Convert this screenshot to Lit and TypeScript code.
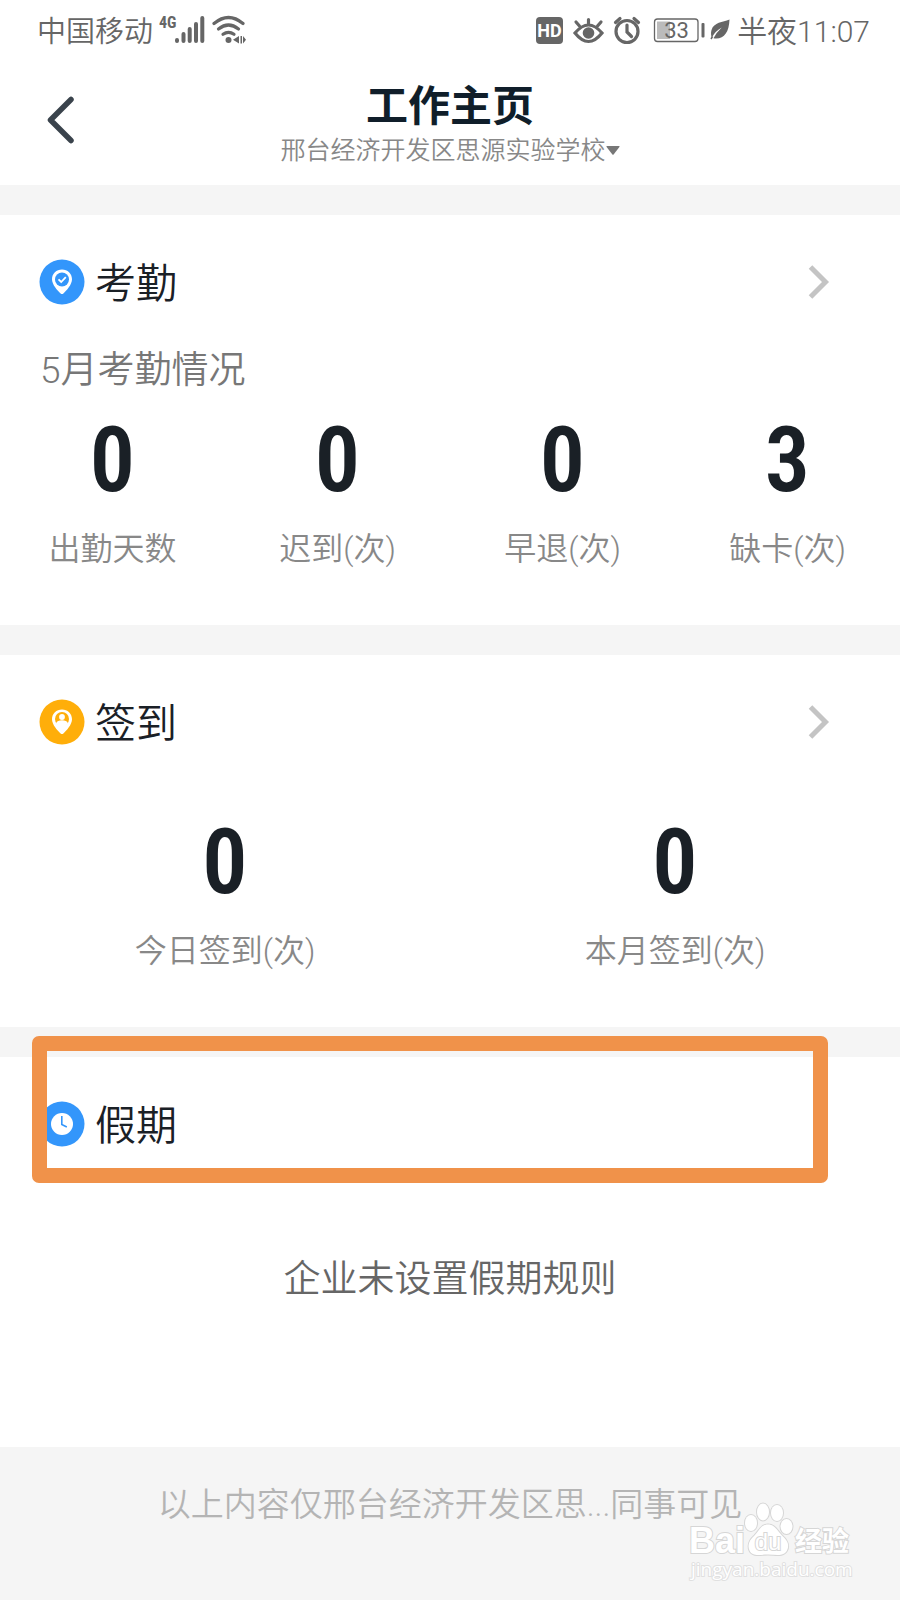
import { LitElement, html, svg, css, nothing } from "lit";
import { customElement, property } from "lit/decorators.js";

interface Stat {
  value: number;
  label: string;
}

const badges: Record<string, unknown> = {
  attendance: svg`
    <circle cx="23" cy="23" r="22.5" fill="#3396fb"/>
    <path d="M23 10.500c-5.600 0-10 4.200-10 9.700 0 5.400 5.600 11.500 8.600 14.200.8.700 2 .7 2.800 0C27.400 31.700 33 25.600 33 20.200c0-5.500-4.400-9.700-10-9.700z" fill="#fff"/>
    <circle cx="23" cy="20.500" r="7" fill="#3396fb"/>
    <path d="M19.500 20.300l2.700 2.700 4.600-4.800" fill="none" stroke="#fff" stroke-width="1.800"/>`,
  checkin: svg`
    <circle cx="23" cy="23" r="22.500" fill="#ffae0a"/>
    <path d="M23 10.500c-5.600 0-10 4.200-10 9.700 0 5.400 5.600 11.500 8.600 14.200.8.700 2 .7 2.800 0C27.400 31.700 33 25.600 33 20.200c0-5.500-4.400-9.700-10-9.700z" fill="#fff"/>
    <circle cx="23" cy="20" r="7" fill="#ffae0a"/>
    <circle cx="23" cy="18" r="2.900" fill="#fff"/>
    <path d="M17 24.500c1-2.600 3-3.200 6-3.200s5 .6 6 3.200l-3 3h-6z" fill="#fff"/>`,
  holiday: svg`
    <circle cx="23" cy="23" r="22.500" fill="#3396fb"/>
    <circle cx="23" cy="23" r="11" fill="#fff"/>
    <path d="M22.800 15v8.500l5 2.500" fill="none" stroke="#3396fb" stroke-width="1.600"/>`,
};

@customElement("status-bar")
export class StatusBar extends LitElement {
  static styles = css`
    :host {
      display: flex;
      justify-content: space-between;
      align-items: center;
      height: 60px;
      padding: 0 30px 0 37px;
      color: #666;
      font-size: 29px;
      line-height: 40px;
    }
    .group {
      display: flex;
      align-items: center;
    }
    .text {
      padding-top: 4px;
    }
    .time {
      font-size: 30px;
    }
    .signals {
      margin-left: 6px;
    }
    .icons {
      margin-right: 6px;
    }
    svg {
      display: block;
    }
    .small {
      font: 700 16px "Roboto Condensed", Roboto, sans-serif;
    }
    .hd {
      font: 700 18px Roboto, sans-serif;
    }
    .level {
      font: 400 22px Roboto, sans-serif;
    }
  `;

  render() {
    return html`
      <div class="group">
        <span class="text">中国移动</span>
        <svg class="signals" width="88" height="32" viewBox="159 14 88 32" fill="#666" role="img" aria-label="4G">
          <text class="small" x="159" y="28">4G</text>
          <g stroke="#666" stroke-width="4" stroke-linecap="round">
            <path d="M177 40v1M183.500 34v7M189.700 29v12M196 24v17M202.300 18v23"/>
          </g>
          <g fill="none" stroke="#666" stroke-width="3.200" stroke-linecap="round">
            <path d="M214 23.500q14.500-12 29 0"/>
            <path d="M218.500 29q10-8 20 0"/>
            <path d="M223 34.300q5.500-4 11 0"/>
          </g>
          <circle cx="228.500" cy="40" r="3"/>
          <path d="M239 36v7.500l-6-3.800zM240.500 36v7.500h1.500V36zM243 36l3 3.800-3 3.700z"/>
        </svg>
      </div>
      <div class="group">
        <svg class="icons" width="196" height="32" viewBox="535 14 196 32" fill="#666" role="img" aria-label="HD 33%">
          <rect x="536" y="17" width="27" height="27" rx="4"/>
          <text class="hd" x="549.500" y="37" text-anchor="middle" fill="#fff">HD</text>
          <g fill="none" stroke="#666" stroke-width="3.200" stroke-linecap="round">
            <path d="M575 33q13.500-16 27 0-13.500 17-27 0z"/>
            <path d="M588.500 19.500v4M576 22l3.500 4M601 22l-3.500 4" />
            <circle cx="627" cy="31.500" r="11"/>
            <path d="M627 25v7l4.500 4.500M615.500 22.500l4.500-4M638.500 22.500l-4.500-4"/>
          </g>
          <circle cx="588.500" cy="33" r="5.800"/>
          <rect x="654.500" y="19" width="43.500" height="22.500" rx="3" fill="none" stroke="#666" stroke-width="1.300"/>
          <rect x="657" y="21.500" width="13" height="17.500" fill="#bbb"/>
          <text class="level" x="676.500" y="38" text-anchor="middle">33</text>
          <rect x="701.500" y="23" width="3" height="14.500" rx="1"/>
          <path d="M729.500 19.500c-7 2.800-15.500 2.500-18 10.500-.9 3-.4 5.800.3 7.500q3.500-6.500 10-10-5.500 5-8.300 10.800c10 1.600 15.500-5.300 16-18.800z"/>
          <path d="M712.600 36.500l-1.600 2.500" stroke="#666" stroke-width="1.500"/>
        </svg>
        <span class="text time">半夜11:07</span>
      </div>
    `;
  }
}

@customElement("work-card")
export class WorkCard extends LitElement {
  @property() heading = "";
  @property() icon = "attendance";
  @property() caption = "";
  @property({ type: Boolean }) linked = false;
  @property({ attribute: false }) stats: Stat[] = [];

  static styles = css`
    :host {
      display: block;
      position: relative;
      padding-top: 37px;
      background: #fff;
    }
    .row {
      display: flex;
      align-items: center;
      gap: 10px;
      height: 60px;
      padding: 0 70px 0 39px;
      color: #1a2026;
      text-decoration: none;
    }
    .heading {
      flex: 1;
      margin: 0;
      padding-top: 3px;
      font-size: 41px;
      font-weight: inherit;
      line-height: 56px;
    }
    .caption {
      margin: 37px 40px 0;
      color: #777;
      font-size: 37px;
      line-height: 44px;
    }
    .stats {
      display: grid;
      grid-auto-flow: column;
      grid-auto-columns: 1fr;
      margin: 0;
      padding: 66px 0 56px;
      text-align: center;
    }
    .caption + .stats {
      padding-top: 23px;
    }
    .stat {
      display: flex;
      flex-direction: column-reverse;
      gap: 23px;
    }
    .value {
      margin: 0;
      color: #1a2026;
      font-family: "Roboto Condensed", "Liberation Sans Narrow", Roboto, sans-serif;
      font-size: 90px;
      font-weight: 600;
      line-height: 90px;
    }
    .label {
      color: #888;
      font-size: 32px;
      line-height: 40px;
    }
  `;

  render() {
    const row = html`
      <svg width="46" height="46" viewBox="0 0 46 46" aria-hidden="true">${badges[this.icon]}</svg>
      <h2 class="heading">${this.heading}</h2>
      ${this.linked
        ? html`<svg width="22" height="36" viewBox="0 0 22 36" fill="none" stroke="#c4c4c4" stroke-width="5" aria-hidden="true"><path d="M2.500 3l15 15-15 15"/></svg>`
        : nothing}
    `;
    return html`
      ${this.linked ? html`<a class="row" href="#${this.icon}">${row}</a>` : html`<div class="row">${row}</div>`}
      ${this.caption ? html`<p class="caption">${this.caption}</p>` : nothing}
      ${this.stats.length
        ? html`<dl class="stats">
            ${this.stats.map(
              (s) => html`<div class="stat"><dt class="label">${s.label}</dt><dd class="value">${s.value}</dd></div>`
            )}
          </dl>`
        : nothing}
      <slot></slot>
    `;
  }
}

@customElement("app-root")
export class AppRoot extends LitElement {
  static styles = css`
    :host {
      display: flex;
      flex-direction: column;
      min-height: 100vh;
      background: #f5f5f5;
      font-family: Roboto, "Noto Sans CJK SC", sans-serif;
      font-weight: 350;
    }
    .top {
      background: #fff;
    }
    .nav {
      display: grid;
      grid-template-columns: 100px 1fr 100px;
      align-items: center;
      height: 125px;
    }
    .back {
      justify-self: start;
      margin-left: 40px;
      padding: 0 0 5px;
      border: 0;
      background: none;
    }
    .back svg {
      display: block;
    }
    .titles {
      display: flex;
      flex-direction: column;
      align-items: center;
      padding-top: 5px;
    }
    .title {
      margin: 0;
      color: #101e2a;
      font-size: 42px;
      font-weight: 700;
      line-height: 52px;
    }
    .org {
      display: flex;
      align-items: center;
      padding: 0;
      border: 0;
      background: none;
      color: #888;
      font: inherit;
      font-size: 25px;
      line-height: 36px;
    }
    .cards {
      display: flex;
      flex-direction: column;
      gap: 30px;
      padding-top: 30px;
    }
    .empty {
      margin: 0;
      padding: 101px 0 142px;
      color: #666;
      font-size: 37px;
      line-height: 50px;
      text-align: center;
    }
    .mark {
      position: absolute;
      top: -21px;
      left: 32px;
      right: 72px;
      height: 147px;
      box-sizing: border-box;
      border: 15px solid #f0924a;
      border-radius: 7px;
      pointer-events: none;
    }
    .foot {
      position: relative;
      flex: 1;
      min-height: 152px;
      color: #b4b4b4;
      font-size: 33px;
      line-height: 40px;
      text-align: center;
    }
    .note {
      margin: 0;
      padding-top: 38px;
    }
    .watermark {
      position: absolute;
      right: 44px;
      bottom: 12px;
      fill: #fff;
      stroke: #d6d6d6;
      stroke-width: 2px;
      paint-order: stroke;
    }
    .brand {
      font: 700 36px "Liberation Sans", sans-serif;
    }
    .du {
      font: 400 24px "Liberation Sans", sans-serif;
    }
    .cjk {
      font: 700 27px "Noto Sans CJK SC", sans-serif;
    }
    .url {
      font: 400 19px "Open Sans", sans-serif;
      stroke: #e0e0e0;
    }
  `;

  private attendance: Stat[] = [
    { value: 0, label: "出勤天数" },
    { value: 0, label: "迟到(次)" },
    { value: 0, label: "早退(次)" },
    { value: 3, label: "缺卡(次)" },
  ];

  private checkins: Stat[] = [
    { value: 0, label: "今日签到(次)" },
    { value: 0, label: "本月签到(次)" },
  ];

  render() {
    return html`
      <header class="top">
        <status-bar></status-bar>
        <div class="nav">
          <button class="back" type="button" aria-label="返回">
            <svg width="40" height="56" viewBox="0 0 40 56" fill="none" stroke="#3a434c" stroke-width="5.500" stroke-linecap="round" stroke-linejoin="round"><path d="M31 7.500L10.500 28 31 48.500"/></svg>
          </button>
          <div class="titles">
            <h1 class="title">工作主页</h1>
            <button class="org" type="button">
              邢台经济开发区思源实验学校
              <svg width="14" height="10" viewBox="0 0 14 10" fill="#777" aria-hidden="true"><path d="M1 0h12q1 0 .4 1L7.600 8.500q-.6.700-1.200 0L.6 1Q0 0 1 0z"/></svg>
            </button>
          </div>
        </div>
      </header>
      <main class="cards">
        <work-card heading="考勤" icon="attendance" caption="5月考勤情况" linked .stats=${this.attendance}></work-card>
        <work-card heading="签到" icon="checkin" linked .stats=${this.checkins}></work-card>
        <work-card heading="假期" icon="holiday">
          <p class="empty">企业未设置假期规则</p>
          <div class="mark"></div>
        </work-card>
      </main>
      <footer class="foot">
        <p class="note">以上内容仅邢台经济开发区思...同事可见</p>
        <svg class="watermark" width="168" height="88" viewBox="688 1500 168 88" role="img" aria-label="Baidu">
          <text class="brand" x="689" y="1553">Bai</text>
          <ellipse cx="751" cy="1523" rx="6" ry="8"/>
          <ellipse cx="763" cy="1512" rx="6" ry="8.500"/>
          <ellipse cx="777" cy="1513" rx="6" ry="8"/>
          <ellipse cx="786.500" cy="1526.500" rx="6" ry="7.500"/>
          <path d="M768 1524.500c7 0 9 6 14 11 5 4.500 8 9 5 15-3.500 6.500-11 4-19 4s-15.500 2.500-18.500-4c-2.500-6 0-10.500 5-15 5-5 6.500-11 13.500-11z"/>
          <text class="du" x="768" y="1550" text-anchor="middle">du</text>
          <text class="cjk" x="795" y="1551">经验</text>
          <text class="url" x="691" y="1576">jingyan.baidu.com</text>
        </svg>
      </footer>
    `;
  }
}
